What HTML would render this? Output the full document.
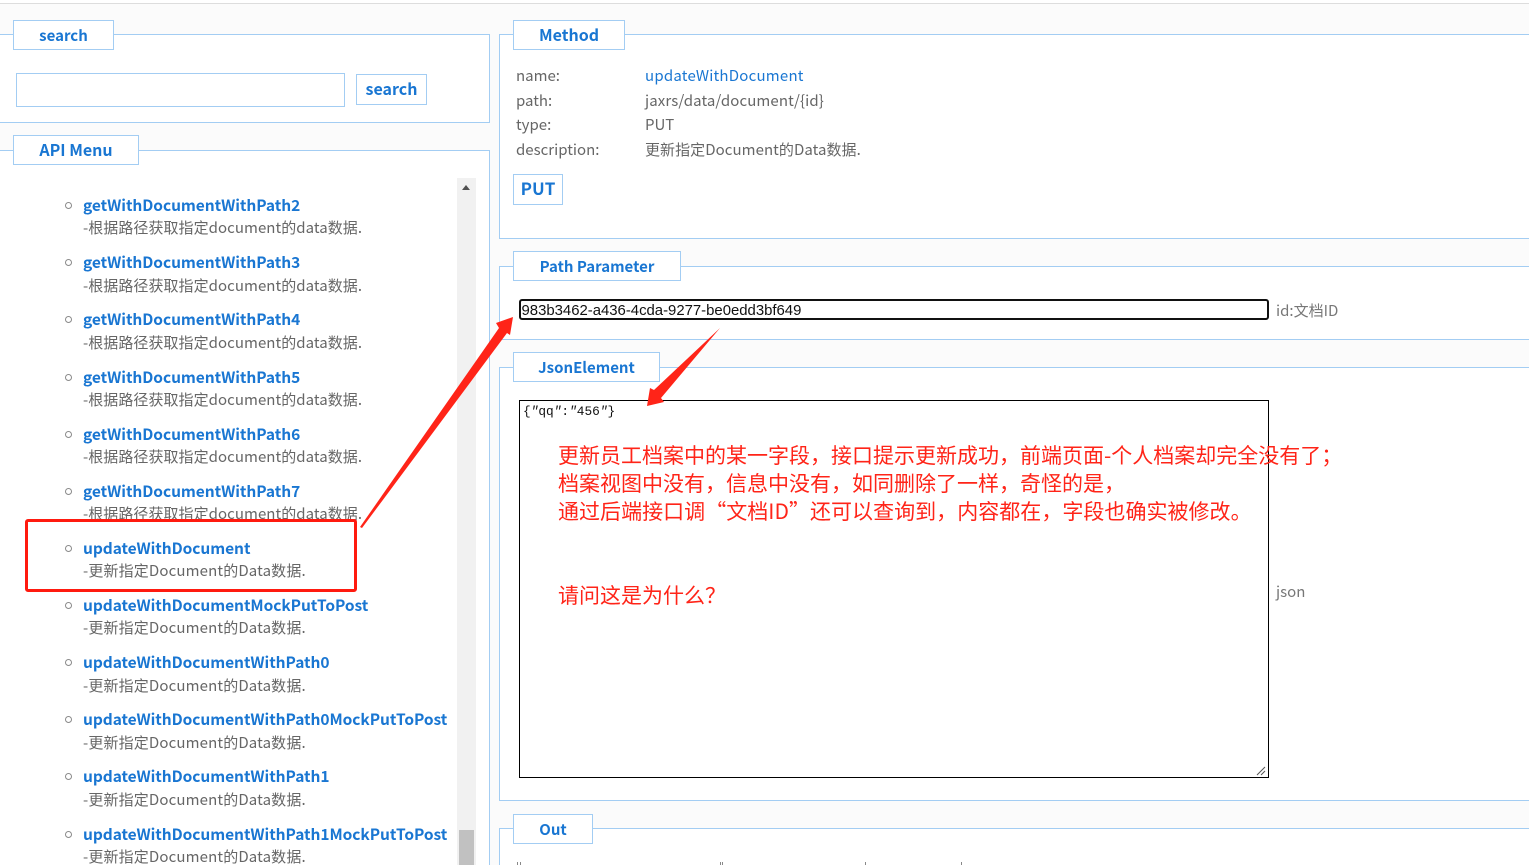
<!DOCTYPE html>
<html><head><meta charset="utf-8"><style>
html,body{margin:0;padding:0;background:#fff;width:1529px;height:865px;overflow:hidden}
body{font-family:"Noto Sans CJK SC","Liberation Sans",sans-serif;font-size:15px;color:#666}
#w{left:0;top:0;width:1529px;height:865px;overflow:hidden;background:#fff}
div,a{position:absolute;box-sizing:border-box;white-space:nowrap}
.f{border:1px solid #a3cdf3;background:#fff}
.l{border:1px solid #a3cdf3;background:#fff;color:#1976d2;font-weight:700;font-size:15px;height:30px;line-height:28px;text-align:center}
.t{color:#1976d2;font-weight:700;font-size:15.5px;left:83px;line-height:22px;height:22px;letter-spacing:-.05px}
.d{color:#666;font-size:15px;left:83px;line-height:22px;height:22px;letter-spacing:.05px}
.e{letter-spacing:.14px}
.b{left:65px;width:7px;height:7px;border:1.5px solid #8a8a8a;border-radius:50%}
.m{line-height:20px;height:20px;font-size:15px}
.r{left:558px;color:#ff2418;font-size:21px;line-height:28px;height:28px}
.c{background:#888;width:1px;height:3px;top:862px}
</style></head><body><div id="w">
<div style="left:0;top:3px;width:1529px;height:1px;background:#ddd"></div>
<div style="left:0;top:4px;width:1529px;height:861px;background:#fbfbfb"></div>

<div class="f" style="left:-1px;top:34px;width:491px;height:89px"></div>
<div class="l" style="left:13px;top:20px;width:101px;line-height:30px">search</div>
<div style="left:16px;top:73px;width:329px;height:34px;border:1px solid #a3cdf3;background:#fff"></div>
<div class="l" style="left:356px;top:74px;width:71px;height:31px;font-size:16px;line-height:27px">search</div>

<div class="f" style="left:-1px;top:150px;width:491px;height:730px"></div>
<div class="l" style="left:13px;top:135px;width:126px;font-size:16px;line-height:26px">API Menu</div>
<div style="left:457px;top:178px;width:19px;height:687px;background:#f1f1f1"></div>
<div style="left:462px;top:185px;width:0;height:0;border-left:4.5px solid transparent;border-right:4.5px solid transparent;border-bottom:5px solid #505050"></div>
<div style="left:459px;top:830px;width:15px;height:35px;background:#c1c1c1"></div>

<div class="b" style="top:202px"></div><a class="t" style="top:194px">getWithDocumentWithPath2</a><div class="d" style="top:217px">-根据路径获取指定document的data数据.</div>
<div class="b" style="top:259px"></div><a class="t" style="top:251px">getWithDocumentWithPath3</a><div class="d" style="top:275px">-根据路径获取指定document的data数据.</div>
<div class="b" style="top:316px"></div><a class="t" style="top:308px">getWithDocumentWithPath4</a><div class="d" style="top:332px">-根据路径获取指定document的data数据.</div>
<div class="b" style="top:374px"></div><a class="t" style="top:366px">getWithDocumentWithPath5</a><div class="d" style="top:389px">-根据路径获取指定document的data数据.</div>
<div class="b" style="top:431px"></div><a class="t" style="top:423px">getWithDocumentWithPath6</a><div class="d" style="top:446px">-根据路径获取指定document的data数据.</div>
<div class="b" style="top:488px"></div><a class="t" style="top:480px">getWithDocumentWithPath7</a><div class="d" style="top:503px">-根据路径获取指定document的data数据.</div>
<div class="b" style="top:545px"></div><a class="t" style="top:537px">updateWithDocument</a><div class="d e" style="top:560px">-更新指定Document的Data数据.</div>
<div class="b" style="top:602px"></div><a class="t" style="top:594px">updateWithDocumentMockPutToPost</a><div class="d e" style="top:617px">-更新指定Document的Data数据.</div>
<div class="b" style="top:659px"></div><a class="t" style="top:651px">updateWithDocumentWithPath0</a><div class="d e" style="top:675px">-更新指定Document的Data数据.</div>
<div class="b" style="top:716px"></div><a class="t" style="top:708px">updateWithDocumentWithPath0MockPutToPost</a><div class="d e" style="top:732px">-更新指定Document的Data数据.</div>
<div class="b" style="top:773px"></div><a class="t" style="top:765px">updateWithDocumentWithPath1</a><div class="d e" style="top:789px">-更新指定Document的Data数据.</div>
<div class="b" style="top:831px"></div><a class="t" style="top:823px">updateWithDocumentWithPath1MockPutToPost</a><div class="d e" style="top:846px">-更新指定Document的Data数据.</div>

<div class="f" style="left:499px;top:34px;width:1040px;height:205px"></div>
<div class="l" style="left:513px;top:20px;width:112px;font-size:16px;line-height:27px">Method</div>
<div class="m" style="left:516px;top:66px">name:</div><div class="m" style="left:645px;top:66px;color:#1976d2;letter-spacing:.22px">updateWithDocument</div>
<div class="m" style="left:516px;top:91px">path:</div><div class="m" style="left:645px;top:91px;letter-spacing:.1px">jaxrs/data/document/{id}</div>
<div class="m" style="left:516px;top:115px">type:</div><div class="m" style="left:645px;top:115px">PUT</div>
<div class="m" style="left:516px;top:140px">description:</div><div class="m" style="left:645px;top:140px;letter-spacing:.06px">更新指定Document的Data数据.</div>
<div class="l" style="left:513px;top:174px;width:50px;height:31px;font-size:17px;line-height:25px">PUT</div>

<div class="f" style="left:499px;top:266px;width:1040px;height:74px"></div>
<div class="l" style="left:513px;top:251px;width:168px;line-height:30px">Path Parameter</div>
<div style="left:519px;top:299px;width:750px;height:21px;border:2px solid #111;border-radius:3px;background:#fff;font-family:'Liberation Sans',sans-serif;font-size:14.9px;line-height:21px;color:#111;padding-left:.5px">983b3462-a436-4cda-9277-be0edd3bf649</div>
<div class="m" style="left:1276px;top:301px;color:#777">id:文档ID</div>

<div class="f" style="left:499px;top:367px;width:1040px;height:434px"></div>
<div class="l" style="left:513px;top:352px;width:147px;line-height:30px">JsonElement</div>
<div style="left:519px;top:400px;width:750px;height:378px;border:1px solid #000;background:#fff"></div>
<div style="left:523px;top:404px;font-family:'Liberation Mono',monospace;font-size:12.8px;line-height:16px;color:#111">{<i>"</i>qq<i>"</i>:<i>"</i>456<i>"</i>}</div>
<svg style="position:absolute;left:1256px;top:765px" width="12" height="12"><path d="M1 10L9 2M5 10L9 6" stroke="#555" stroke-width="1" fill="none"/></svg>
<div class="m" style="left:1276px;top:582px;color:#777">json</div>

<div class="f" style="left:499px;top:828px;width:1040px;height:60px"></div>
<div class="l" style="left:513px;top:814px;width:80px;line-height:30px">Out</div>
<div class="c" style="left:517px"></div><div class="c" style="left:520px"></div><div class="c" style="left:720px"></div><div class="c" style="left:722px"></div><div class="c" style="left:865px"></div><div class="c" style="left:961px"></div>

<div class="r" style="top:441px">更新员工档案中的某一字段，接口提示更新成功，前端页面-个人档案却完全没有了；</div>
<div class="r" style="top:469px">档案视图中没有，信息中没有，如同删除了一样，奇怪的是，</div>
<div class="r" style="top:497px;letter-spacing:.03px">通过后端接口调“文档ID”还可以查询到，内容都在，字段也确实被修改。</div>
<div class="r" style="top:581px">请问这是为什么？</div>

<div style="left:25px;top:519px;width:332px;height:73px;border:3px solid #ff1a0f;border-radius:3px"></div>
<svg style="position:absolute;left:0;top:0" width="1529" height="865">
<polygon fill="#ff2418" points="360,527 362,528 507,333 510,335 513,317 496,323 499,328"/>
<polygon fill="#ff2418" points="720,328 654,390 650,388 647,406 664,402 661,398"/>
</svg>
</div></body></html>
